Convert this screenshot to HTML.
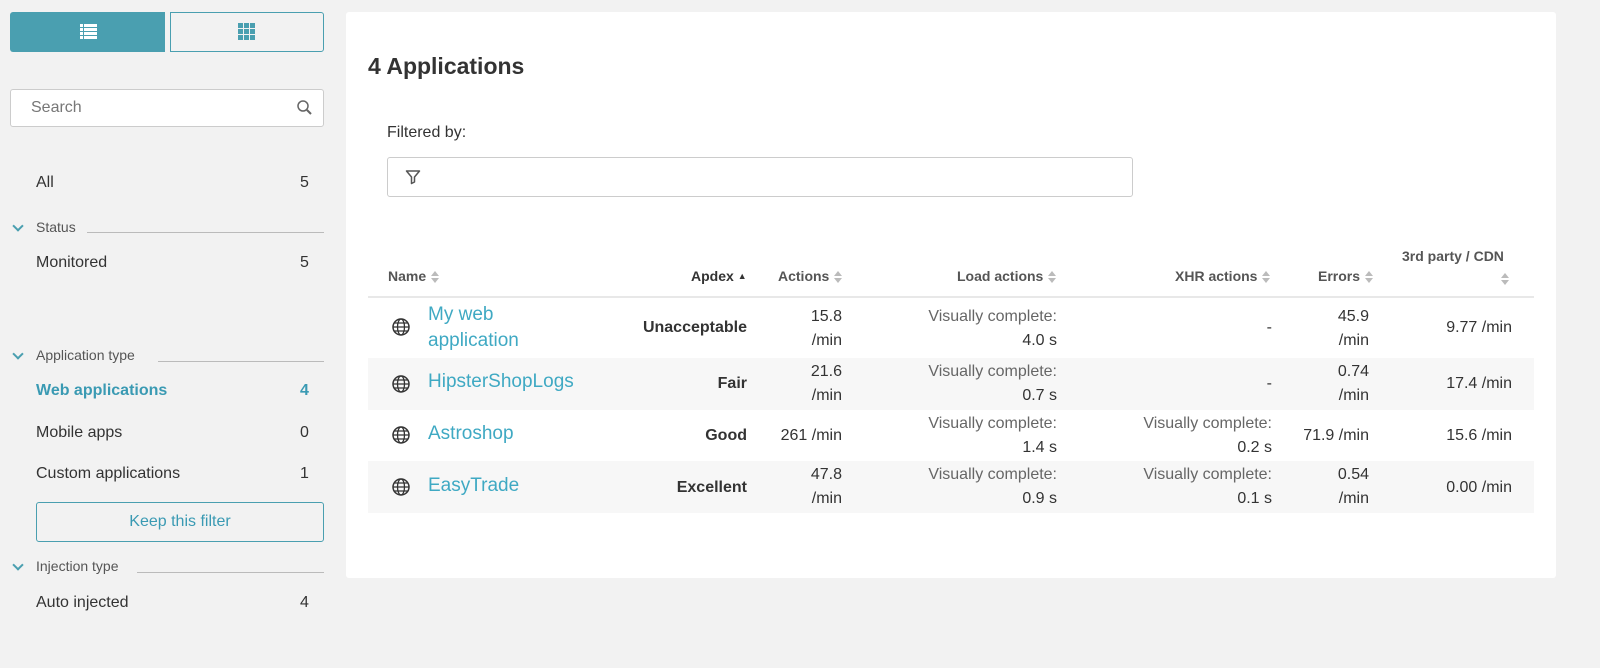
<!DOCTYPE html>
<html><head><style>
body{margin:0;width:1600px;height:668px;background:#f2f2f2;font-family:"Liberation Sans",sans-serif;color:#333;position:relative;overflow:hidden}
.a{position:absolute;white-space:nowrap}
.r{text-align:right}
.t{font-size:16px;line-height:24px}
.h{font-size:14px;color:#555;font-weight:bold}
.g{color:#666}
.sort{display:inline-block;width:8px;height:12px;vertical-align:middle;margin-left:5px;position:relative}
.sort:before{content:"";position:absolute;left:0;top:0;border:4px solid transparent;border-bottom:5px solid #bbb;border-top:0}
.sort:after{content:"";position:absolute;left:0;top:7px;border:4px solid transparent;border-top:5px solid #bbb;border-bottom:0}
.sec{font-size:14px;color:#555}
.line{position:absolute;height:1px;background:#bbb}
.chev{position:absolute;width:6px;height:6px;border-right:2px solid #4a9fb0;border-bottom:2px solid #4a9fb0;transform:rotate(45deg)}
.link{color:#3fa9c3;font-size:19px}
.glob{position:absolute;width:18px;height:18px}
</style></head><body>
<div class="a" style="left:10px;top:12px;width:155px;height:40px;background:#4a9fb0;border-radius:3px 0 0 3px"></div>
<svg class="a" style="left:80px;top:23px" width="17" height="17" viewBox="0 0 17 17" fill="#fff"><rect x="0" y="1" width="3" height="3"/><rect x="4" y="1" width="13" height="3"/><rect x="0" y="5" width="3" height="3"/><rect x="4" y="5" width="13" height="3"/><rect x="0" y="9" width="3" height="3"/><rect x="4" y="9" width="13" height="3"/><rect x="0" y="13" width="3" height="3"/><rect x="4" y="13" width="13" height="3"/></svg>
<div class="a" style="left:170px;top:12px;width:152px;height:38px;border:1px solid #4a9fb0;border-radius:0 3px 3px 0"></div>
<svg class="a" style="left:238px;top:23px" width="17" height="17" viewBox="0 0 17 17" fill="#4a9fb0"><rect x="0" y="0" width="5" height="5"/><rect x="6" y="0" width="5" height="5"/><rect x="12" y="0" width="5" height="5"/><rect x="0" y="6" width="5" height="5"/><rect x="6" y="6" width="5" height="5"/><rect x="12" y="6" width="5" height="5"/><rect x="0" y="12" width="5" height="5"/><rect x="6" y="12" width="5" height="5"/><rect x="12" y="12" width="5" height="5"/></svg>
<div class="a" style="left:10px;top:89px;width:312px;height:36px;background:#fff;border:1px solid #ccc;border-radius:3px"></div>
<div class="a t" style="left:31px;top:96px;color:#777">Search</div>
<svg class="a" style="left:296px;top:99px" width="18" height="18" viewBox="0 0 18 18"><circle cx="7" cy="7" r="5" fill="none" stroke="#666" stroke-width="1.5"/><path d="M11 11l4 4" stroke="#666" stroke-width="2"/></svg>

<div class="a t" style="left:36px;top:171px">All</div><div class="a t" style="left:300px;top:171px">5</div>
<div class="chev" style="left:14px;top:222px"></div><div class="a sec" style="left:36px;top:219px">Status</div><div class="line" style="left:87px;top:232px;width:237px"></div>
<div class="a t" style="left:36px;top:251px">Monitored</div><div class="a t" style="left:300px;top:251px">5</div>
<div class="chev" style="left:14px;top:350px"></div><div class="a sec" style="left:36px;top:347px">Application type</div><div class="line" style="left:158px;top:361px;width:166px"></div>
<div class="a t" style="left:36px;top:379px;color:#3a9ab3;font-weight:bold">Web applications</div><div class="a t" style="left:300px;top:379px;color:#3a9ab3;font-weight:bold">4</div>
<div class="a t" style="left:36px;top:421px">Mobile apps</div><div class="a t" style="left:300px;top:421px">0</div>
<div class="a t" style="left:36px;top:462px">Custom applications</div><div class="a t" style="left:300px;top:462px">1</div>
<div class="a" style="left:36px;top:502px;width:286px;height:38px;border:1px solid #4a9fb0;border-radius:3px;color:#3a9ab3;font-size:16px;line-height:38px;text-align:center">Keep this filter</div>
<div class="chev" style="left:14px;top:561px"></div><div class="a sec" style="left:36px;top:558px">Injection type</div><div class="line" style="left:137px;top:572px;width:187px"></div>
<div class="a t" style="left:36px;top:591px">Auto injected</div><div class="a t" style="left:300px;top:591px">4</div>

<div class="a" style="left:346px;top:12px;width:1210px;height:566px;background:#fff;border-radius:3px"></div>
<div class="a" style="left:368px;top:53px;font-size:23px;font-weight:bold;color:#333">4 Applications</div>
<div class="a t" style="left:387px;top:121px">Filtered by:</div>
<div class="a" style="left:387px;top:157px;width:744px;height:38px;border:1px solid #ccc;border-radius:3px"></div>
<svg class="a" style="left:405px;top:169px" width="16" height="16" viewBox="0 0 16 16"><path d="M1.5 2h13l-5 6v5l-3 1.5V8z" fill="none" stroke="#555" stroke-width="1.5" stroke-linejoin="round"/></svg>

<div class="a h" style="left:388px;top:268px">Name<span class="sort"></span></div>
<div class="a h" style="left:691px;top:268px;color:#333">Apdex <span style="font-size:9px;vertical-align:2px">▲</span></div>
<div class="a h" style="left:778px;top:268px">Actions<span class="sort"></span></div>
<div class="a h" style="left:957px;top:268px">Load actions<span class="sort"></span></div>
<div class="a h" style="left:1175px;top:268px">XHR actions<span class="sort"></span></div>
<div class="a h" style="left:1318px;top:268px">Errors<span class="sort"></span></div>
<div class="a h" style="left:1402px;top:248px">3rd party / CDN</div><div class="a" style="left:1501px;top:270px"><span class="sort" style="margin:0"></span></div>
<div class="a" style="left:368px;top:296px;width:1166px;height:2px;background:#e8e8e8"></div>
<div class="a" style="left:368px;top:358px;width:1166px;height:52px;background:#f7f7f7"></div>
<div class="a" style="left:368px;top:461px;width:1166px;height:52px;background:#f7f7f7"></div>

<!-- rows -->
<svg class="a" width="0" height="0"><defs><g id="gl"><circle cx="9" cy="9" r="8" fill="none" stroke="#333" stroke-width="1.5"/><ellipse cx="9" cy="9" rx="3.5" ry="8" fill="none" stroke="#333" stroke-width="1.3"/><path d="M1 9h16M2.5 5h13M2.5 13h13" stroke="#333" stroke-width="1.2"/></g></defs></svg>
<svg class="glob" style="left:392px;top:318px"><use href="#gl"/></svg>
<svg class="glob" style="left:392px;top:375px"><use href="#gl"/></svg>
<svg class="glob" style="left:392px;top:426px"><use href="#gl"/></svg>
<svg class="glob" style="left:392px;top:478px"><use href="#gl"/></svg>

<div class="a link" style="left:428px;top:302px;line-height:26px">My web<br>application</div>
<div class="a link" style="left:428px;top:371px">HipsterShopLogs</div>
<div class="a link" style="left:428px;top:423px">Astroshop</div>
<div class="a link" style="left:428px;top:475px">EasyTrade</div>

<div class="a t r" style="right:853px;top:316px;font-weight:bold">Unacceptable</div>
<div class="a t r" style="right:853px;top:372px;font-weight:bold">Fair</div>
<div class="a t r" style="right:853px;top:424px;font-weight:bold">Good</div>
<div class="a t r" style="right:853px;top:476px;font-weight:bold">Excellent</div>

<div class="a t r" style="right:758px;top:305px">15.8<br>/min</div>
<div class="a t r" style="right:758px;top:360px">21.6<br>/min</div>
<div class="a t r" style="right:758px;top:424px">261 /min</div>
<div class="a t r" style="right:758px;top:463px">47.8<br>/min</div>

<div class="a t r" style="right:543px;top:305px"><span class="g">Visually complete:</span><br>4.0 s</div>
<div class="a t r" style="right:543px;top:360px"><span class="g">Visually complete:</span><br>0.7 s</div>
<div class="a t r" style="right:543px;top:412px"><span class="g">Visually complete:</span><br>1.4 s</div>
<div class="a t r" style="right:543px;top:463px"><span class="g">Visually complete:</span><br>0.9 s</div>

<div class="a t r" style="right:328px;top:316px">-</div>
<div class="a t r" style="right:328px;top:372px">-</div>
<div class="a t r" style="right:328px;top:412px"><span class="g">Visually complete:</span><br>0.2 s</div>
<div class="a t r" style="right:328px;top:463px"><span class="g">Visually complete:</span><br>0.1 s</div>

<div class="a t r" style="right:231px;top:305px">45.9<br>/min</div>
<div class="a t r" style="right:231px;top:360px">0.74<br>/min</div>
<div class="a t r" style="right:231px;top:424px">71.9 /min</div>
<div class="a t r" style="right:231px;top:463px">0.54<br>/min</div>

<div class="a t r" style="right:88px;top:316px">9.77 /min</div>
<div class="a t r" style="right:88px;top:372px">17.4 /min</div>
<div class="a t r" style="right:88px;top:424px">15.6 /min</div>
<div class="a t r" style="right:88px;top:476px">0.00 /min</div>
</body></html>
